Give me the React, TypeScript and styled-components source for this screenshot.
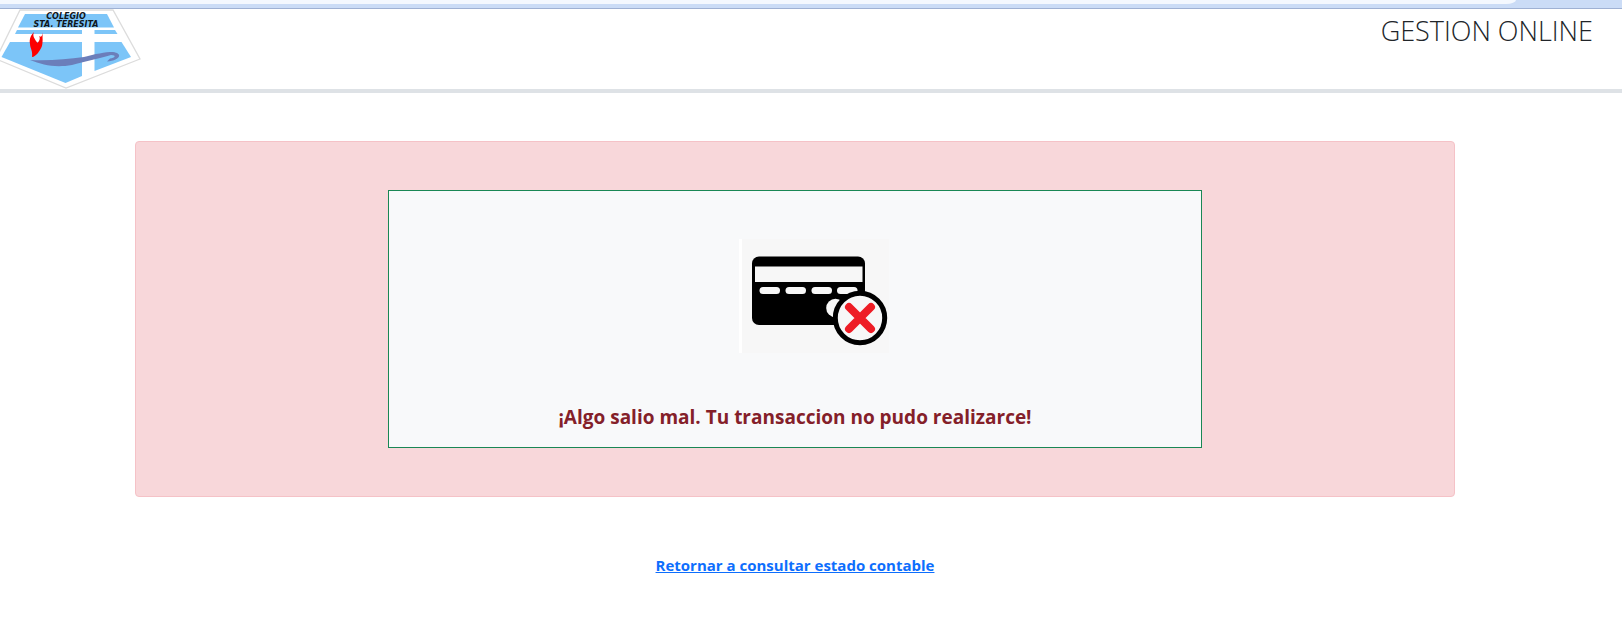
import React from "react";
import styled, { createGlobalStyle } from "styled-components";

const GlobalStyle = createGlobalStyle`
  *, *::before, *::after { box-sizing: border-box; }
  body {
    margin: 0;
    background: #ffffff;
    color: #212529;
    font-family: "Segoe UI", "Open Sans", "Noto Sans", sans-serif;
    font-size: 15px;
    line-height: 24px;
  }
`;

const BrowserEdge = styled.div`
  height: 9px;
  background: #cbdcf6;
  border-bottom: 1px solid #9fb1d3;
`;

const AddressBar = styled.div`
  height: 4px;
  margin-right: 106px;
  background: #f4f8fe;
  border-bottom-right-radius: 10px 4px;
`;

const Header = styled.header`
  display: flex;
  justify-content: space-between;
  align-items: flex-start;
  padding-right: 29px;
  border-bottom: 4px solid #dee2e6;
`;

const LogoDrawing = styled.svg`
  display: block;
  width: 144px;
  height: 80px;
`;

const Title = styled.h1`
  margin: 5px 0 0;
  font-size: 27px;
  line-height: 34px;
  font-weight: 300;
`;

const Main = styled.main`
  display: flex;
  flex-direction: column;
  align-items: center;
  gap: 56px;
  padding: 48px 32px 48px 0;
`;

const Alert = styled.section`
  display: flex;
  justify-content: center;
  width: 100%;
  max-width: 1320px;
  padding: 48px 16px;
  background: #f8d7da;
  border: 1px solid #f5c2c7;
  border-radius: 4px;
`;

const Card = styled.div`
  display: flex;
  flex-direction: column;
  align-items: center;
  gap: 48px;
  width: 100%;
  max-width: 814px;
  padding: 48px 16px 14px;
  background: #f8f9fa;
  border: 1px solid #198754;
`;

const CardDrawing = styled.svg`
  display: block;
  width: 188px;
  height: 114px;
`;

const Message = styled.p`
  margin: 0;
  color: #842029;
  font-size: 19px;
  line-height: 32px;
  font-weight: 700;
  text-align: center;
`;

const ReturnLink = styled.a`
  color: #0d6efd;
  font-weight: 700;
  text-decoration: underline;
`;

const SchoolLogo = () => (
  <LogoDrawing viewBox="0 0 144 80" role="img" aria-label="Colegio Sta. Teresita">
    <path d="M20 1H113L140 50L66 79L-4 50Z" fill="#fff" stroke="#dcdcdc" strokeWidth="1.3" />
    <g fill="#7cc5f8">
      <path d="M25 5H107L114 18.500H18Z" />
      <path d="M17 21H82V25H15Z" />
      <path d="M94.500 21H115L117.500 25H94.500Z" />
      <path d="M10 33H82V67L65.500 74L1.500 48Z" />
      <path d="M94.500 33H121.500L131 48L94.500 62Z" />
    </g>
    <g fontFamily="DejaVu Sans, sans-serif" fontWeight="700" fontStyle="oblique" fontSize="8" fill="#10151a" textAnchor="middle">
      <text x="66" y="10">COLEGIO</text>
      <text x="66" y="18">STA. TERESITA</text>
    </g>
    <path d="M34 23C32 27 35 30 36 32L37.500 34L39 32C40 30 40 28 39 27C42 29 42 26 43 23.500C42 27 43 30 42.500 33C42.500 38 40 41 38 44C36 46 34 48 32 48C33 42 30 39 30 35C29 30 31 26 34 23Z" fill="#fd0000" />
    <path d="M30 51C50 52 67 50 84 48C95 45 105 43 113 43C122 44 122 51 107 52.500L110 49.500C115 49 117 46 111 46C100 49 84 53 72 56C55 59 43 56 30 51Z" fill="#6b7eba" />
  </LogoDrawing>
);

const RejectedCard = () => (
  <CardDrawing viewBox="0 0 188 114" role="img" aria-label="Tarjeta rechazada">
    <rect x="38" width="3" height="114" fill="#fff" />
    <rect x="41" width="147" height="114" fill="#f7f7f7" />
    <rect x="51" y="17.500" width="113" height="68.500" rx="7" fill="#000" />
    <rect x="54" y="27.500" width="107.500" height="15.500" fill="#f7f7f7" />
    <g fill="#f7f7f7">
      <rect x="58.500" y="48" width="20.500" height="7" rx="3.500" />
      <rect x="84.500" y="48" width="20.500" height="7" rx="3.500" />
      <rect x="110.500" y="48" width="20.500" height="7" rx="3.500" />
      <rect x="136" y="48" width="20.500" height="7" rx="3.500" />
      <circle cx="134.500" cy="69" r="9.300" />
    </g>
    <circle cx="159" cy="79" r="24.700" fill="#f7f7f7" stroke="#000" strokeWidth="5" />
    <path d="M148 68L170 90M170 68L148 90" stroke="#ee1c25" strokeWidth="8" strokeLinecap="round" />
  </CardDrawing>
);

export default function App() {
  return (
    <>
      <GlobalStyle />
      <BrowserEdge>
        <AddressBar />
      </BrowserEdge>
      <Header>
        <SchoolLogo />
        <Title>GESTION ONLINE</Title>
      </Header>
      <Main>
        <Alert role="alert">
          <Card>
            <RejectedCard />
            <Message>¡Algo salio mal. Tu transaccion no pudo realizarce!</Message>
          </Card>
        </Alert>
        <ReturnLink href="#estado-contable">Retornar a consultar estado contable</ReturnLink>
      </Main>
    </>
  );
}
